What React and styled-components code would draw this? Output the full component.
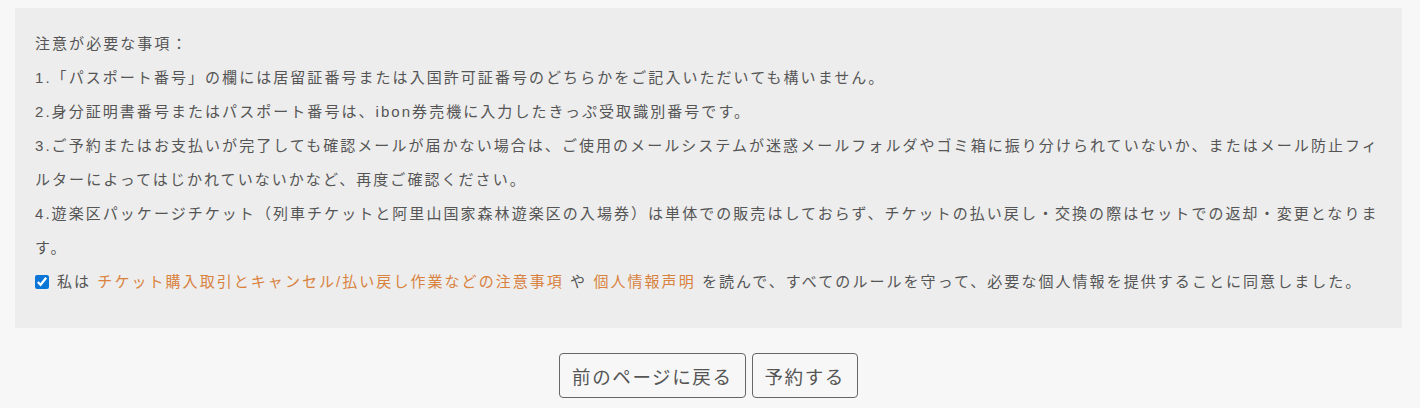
import React, { useState } from 'react'
import styled, { createGlobalStyle } from 'styled-components'

const GlobalStyle = createGlobalStyle`
  html, body {
    margin: 0;
    padding: 0;
    background: #f7f7f7;
  }
  body {
    font-family: "Liberation Sans", "Noto Sans CJK JP", sans-serif;
    color: #555;
  }
`;

const notes = [
  '1.「パスポート番号」の欄には居留証番号または入国許可証番号のどちらかをご記入いただいても構いません。',
  '2.身分証明書番号またはパスポート番号は、ibon券売機に入力したきっぷ受取識別番号です。',
  '3.ご予約またはお支払いが完了しても確認メールが届かない場合は、ご使用のメールシステムが迷惑メールフォルダやゴミ箱に振り分けられていないか、またはメール防止フィルターによってはじかれていないかなど、再度ご確認ください。',
  '4.遊楽区パッケージチケット（列車チケットと阿里山国家森林遊楽区の入場券）は単体での販売はしておらず、チケットの払い戻し・交換の際はセットでの返却・変更となります。',
];

const App = () => {
  const [agreed, setAgreed] = useState(true)

  return (
    <Page>
      <GlobalStyle />
      <Notice>
        <Title>注意が必要な事項：</Title>
        {notes.map((n) => (
          <Line key={n}>{n}</Line>
        ))}
        <Agree>
          <Check
            type="checkbox"
            checked={agreed}
            onChange={(e) => setAgreed(e.target.checked)}
          />
          <span>
            私は <Link href="#">チケット購入取引とキャンセル/払い戻し作業などの注意事項</Link> や{' '}
            <Link href="#">個人情報声明</Link> を読んで、すべてのルールを守って、必要な個人情報を提供することに同意しました。
          </span>
        </Agree>
      </Notice>
      <Actions>
        <Button>前のページに戻る</Button>
        <Button>予約する</Button>
      </Actions>
    </Page>
  )
}

const Page = styled.div`
  padding: 8px 18px 0 15px;
`;

const Notice = styled.div`
  background: #ededed;
  padding: 19px 20px 29px 20px;
  font-size: 15px;
  line-height: 34px;
  letter-spacing: 2.05px;
`;

const Title = styled.p`
  margin: 0;
`;

const Line = styled.p`
  margin: 0;
`;

const Agree = styled.label`
  display: flex;
  align-items: flex-start;
  gap: 8px;
  cursor: pointer;
`;

const Check = styled.input`
  margin: 10px 0 0 0;
  width: 14px;
  height: 14px;
  accent-color: #0b76d8;
  flex-shrink: 0;
`;

const Link = styled.a`
  color: #d9823e;
  text-decoration: none;
`;

const Actions = styled.div`
  display: flex;
  justify-content: center;
  gap: 6px;
  margin-top: 25px;
`;

const Button = styled.button`
  font-family: "Liberation Sans", "Noto Sans CJK JP", sans-serif;
  font-size: 18.5px;
  letter-spacing: 1.6px;
  color: #555;
  background: #f7f7f7;
  border: 1px solid #666;
  border-radius: 4px;
  height: 45px;
  padding: 0 12px;
  cursor: pointer;
`;

export default App
